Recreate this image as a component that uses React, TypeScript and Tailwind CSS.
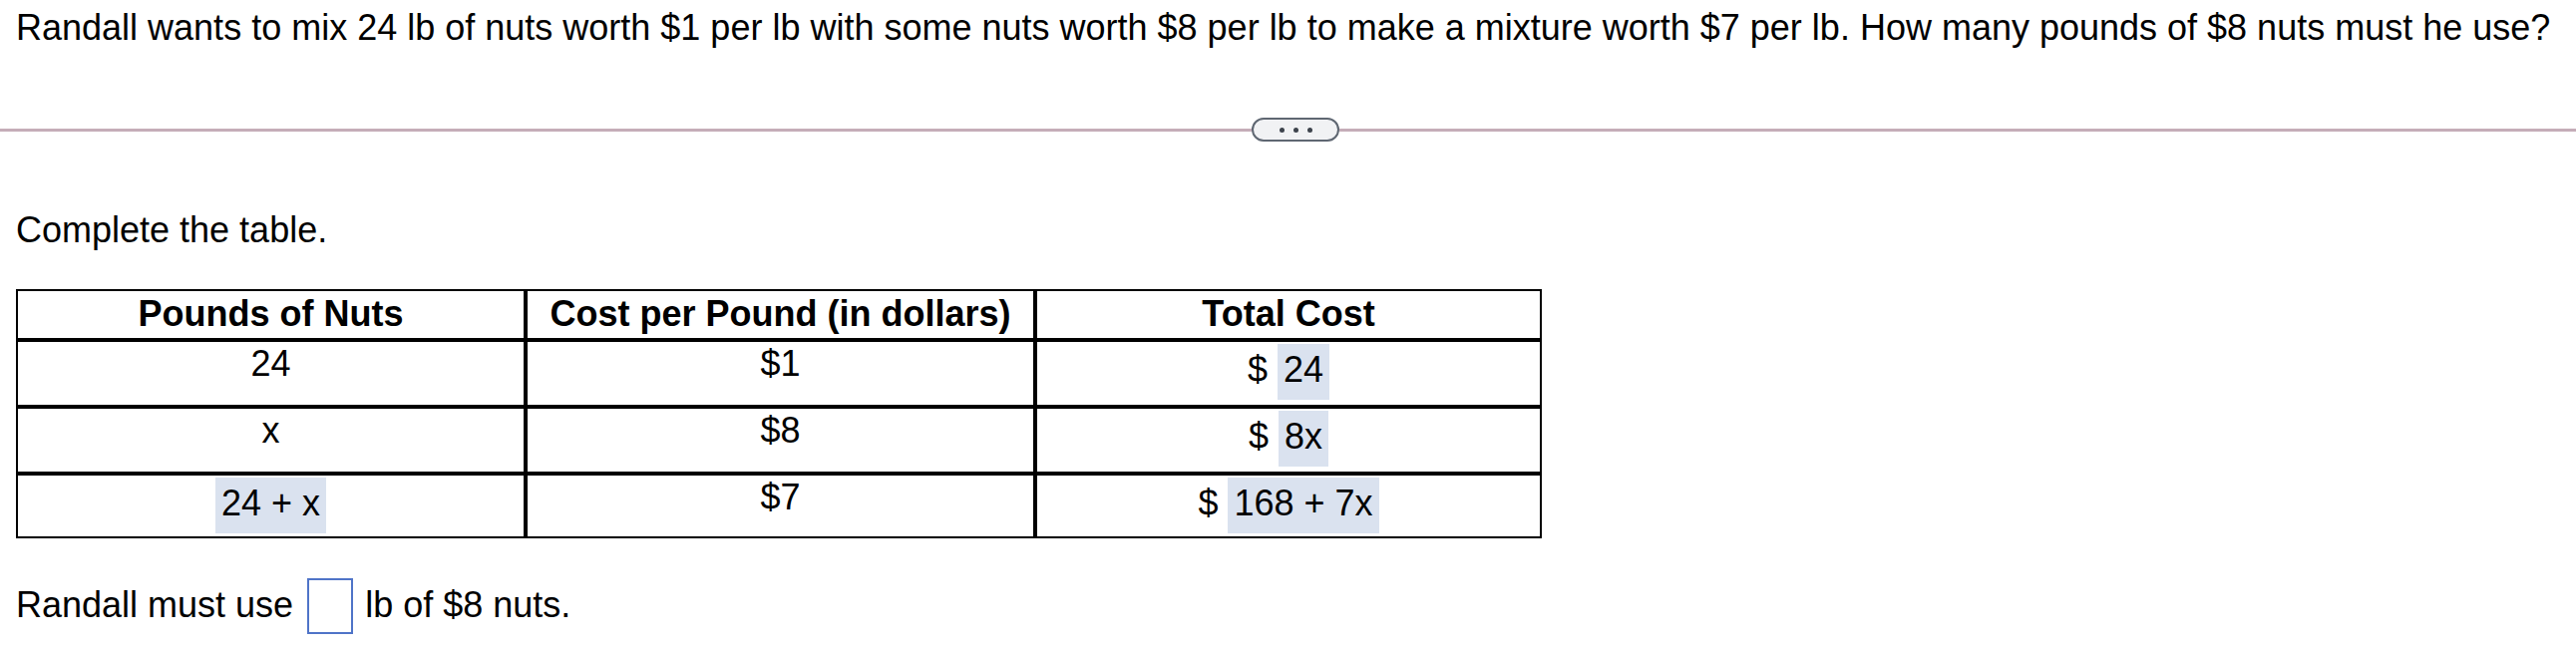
import React from "react";

const Answer: React.FC<{ children: React.ReactNode }> = ({ children }) => (
  <span className="inline-block bg-[#dae2ef] px-[6px] pt-[6px] pb-[10px] leading-[40px]">
    {children}
  </span>
);

const App: React.FC = () => {
  return (
    <div className="min-h-screen bg-white text-black font-['Liberation_Sans',Arial,sans-serif] text-[36px] leading-[40px] pt-[8px]">
      {/* Question */}
      <p className="pl-[16px] whitespace-nowrap">
        Randall wants to mix 24 lb of nuts worth $1 per lb with some nuts worth $8 per lb to make a mixture worth $7 per lb. How many pounds of $8 nuts must he use?
      </p>

      {/* Divider with collapse pill */}
      <div className="mt-[70px] flex items-center">
        <div className="w-[1255px] h-[3px] bg-[#c5adb8]" />
        <div className="w-[88px] h-[24px] rounded-full border-2 border-[#5f6772] bg-[#f1f2f4] flex items-center justify-center gap-[9px]">
          <span className="w-[5px] h-[5px] rounded-full bg-[#3d434c]" />
          <span className="w-[5px] h-[5px] rounded-full bg-[#3d434c]" />
          <span className="w-[5px] h-[5px] rounded-full bg-[#3d434c]" />
        </div>
        <div className="flex-1 h-[3px] bg-[#c5adb8]" />
      </div>

      <div className="pl-[16px]">
        <p className="mt-[69px]">Complete the table.</p>

        {/* Table */}
        <div className="mt-[39px] w-[1530px] border-2 border-black">
          <div className="grid grid-cols-[507px_511px_1fr] h-[51px] border-b-4 border-black font-bold text-center">
            <div className="pt-[3px]">Pounds of Nuts</div>
            <div className="pt-[3px] border-l-4 border-black">Cost per Pound (in dollars)</div>
            <div className="pt-[3px] border-l-4 border-black">Total Cost</div>
          </div>

          <div className="grid grid-cols-[507px_511px_1fr] h-[67px] border-b-4 border-black text-center">
            <div className="pt-[2px]">24</div>
            <div className="pt-[2px] border-l-4 border-black">$1</div>
            <div className="pt-[2px] border-l-4 border-black">
              $ <Answer>24</Answer>
            </div>
          </div>

          <div className="grid grid-cols-[507px_511px_1fr] h-[67px] border-b-4 border-black text-center">
            <div className="pt-[2px]">x</div>
            <div className="pt-[2px] border-l-4 border-black">$8</div>
            <div className="pt-[2px] border-l-4 border-black">
              $ <Answer>8x</Answer>
            </div>
          </div>

          <div className="grid grid-cols-[507px_511px_1fr] h-[61px] text-center">
            <div className="pt-[2px]">
              <Answer>24 + x</Answer>
            </div>
            <div className="pt-[2px] border-l-4 border-black">$7</div>
            <div className="pt-[2px] border-l-4 border-black">
              $ <Answer>168 + 7x</Answer>
            </div>
          </div>
        </div>

        {/* Answer line */}
        <div className="mt-[40px] flex items-start">
          <span className="pt-[7px]">Randall must use</span>
          <span className="ml-[14px] mr-[12px] w-[46px] h-[56px] border-2 border-[#4f74c8] bg-white" />
          <span className="pt-[7px]">lb of $8 nuts.</span>
        </div>
      </div>
    </div>
  );
};

export default App;
